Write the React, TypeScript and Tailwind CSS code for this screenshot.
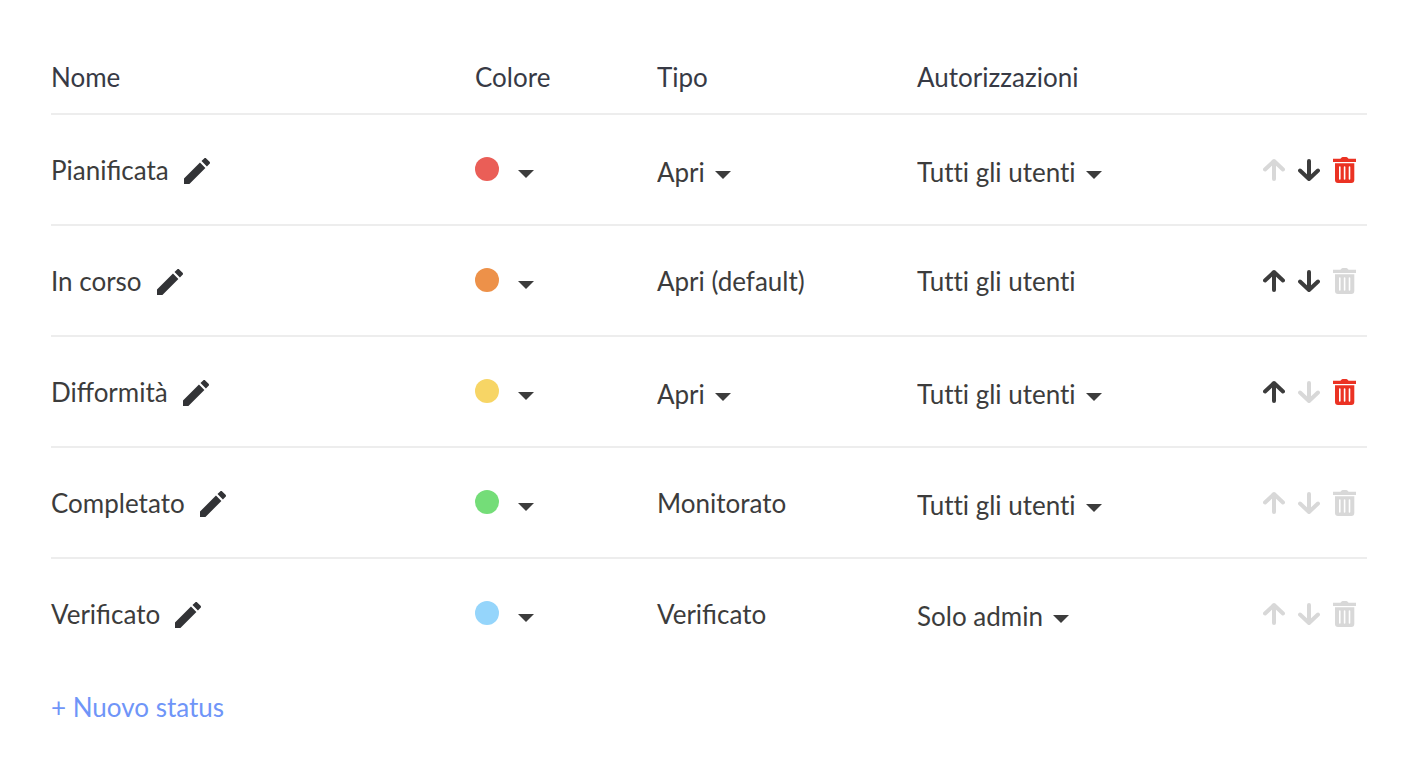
type Status = {
  name: string;
  color: string;
  colorName: string;
  type: string;
  typeEditable: boolean;
  access: string;
  accessEditable: boolean;
  canMoveUp: boolean;
  canMoveDown: boolean;
  canDelete: boolean;
};

const ACCESS_OPTIONS = ["Tutti gli utenti", "Solo admin"];
const TYPE_OPTIONS = ["Apri", "Monitorato", "Verificato"];

const STATUSES: Status[] = [
  {
    name: "Pianificata",
    color: "bg-[#ea5e57]",
    colorName: "rosso",
    type: "Apri",
    typeEditable: true,
    access: "Tutti gli utenti",
    accessEditable: true,
    canMoveUp: false,
    canMoveDown: true,
    canDelete: true,
  },
  {
    name: "In corso",
    color: "bg-[#ed9149]",
    colorName: "arancione",
    type: "Apri (default)",
    typeEditable: false,
    access: "Tutti gli utenti",
    accessEditable: false,
    canMoveUp: true,
    canMoveDown: true,
    canDelete: false,
  },
  {
    name: "Difformità",
    color: "bg-[#f7d565]",
    colorName: "giallo",
    type: "Apri",
    typeEditable: true,
    access: "Tutti gli utenti",
    accessEditable: true,
    canMoveUp: true,
    canMoveDown: false,
    canDelete: true,
  },
  {
    name: "Completato",
    color: "bg-[#74dd78]",
    colorName: "verde",
    type: "Monitorato",
    typeEditable: false,
    access: "Tutti gli utenti",
    accessEditable: true,
    canMoveUp: false,
    canMoveDown: false,
    canDelete: false,
  },
  {
    name: "Verificato",
    color: "bg-[#95d5fb]",
    colorName: "azzurro",
    type: "Verificato",
    typeEditable: false,
    access: "Solo admin",
    accessEditable: true,
    canMoveUp: false,
    canMoveDown: false,
    canDelete: false,
  },
];

function PencilIcon() {
  return (
    <svg viewBox="3 3 18 18" className="size-[26px]" fill="currentColor" aria-hidden="true">
      <path d="M20.71 7.04c.39-.39.39-1.04 0-1.41l-2.34-2.34c-.37-.39-1.02-.39-1.41 0l-1.84 1.83 3.75 3.75M3 17.25V21h3.75L17.81 9.93l-3.75-3.75L3 17.25Z" />
    </svg>
  );
}

function CaretIcon() {
  return (
    <svg viewBox="0 0 16 8" className="h-2 w-4" fill="currentColor" aria-hidden="true">
      <path d="M0 0h16L8 8Z" />
    </svg>
  );
}

function ArrowIcon({ down = false }: { down?: boolean }) {
  return (
    <svg
      viewBox="0 0 22 24"
      className="h-6 w-[22px]"
      fill="none"
      stroke="currentColor"
      strokeWidth="4"
      strokeLinecap="round"
      strokeLinejoin="round"
      aria-hidden="true"
    >
      {down ? <path d="M11 3v18M2 12.5l9 8.5 9-8.5" /> : <path d="M11 21V3M2 11.5L11 3l9 8.5" />}
    </svg>
  );
}

function TrashIcon() {
  return (
    <svg viewBox="0 0 23 26" className="h-[26px] w-[23px]" fill="currentColor" aria-hidden="true">
      <path d="M0 1.8h7.4L8.6.4Q9 0 9.6 0h3.8q.6 0 1 .4l1.2 1.4H23V5H0Z" />
      <path
        fillRule="evenodd"
        d="M2 6.3h19.3V23a3 3 0 0 1-3 3H5a3 3 0 0 1-3-3ZM6 10v12q0 .8.8.8t.8-.8V10q0-.8-.8-.8T6 10Zm4.8 0v12q0 .8.8.8t.8-.8V10q0-.8-.8-.8t-.8.8Zm4.9 0v12q0 .8.8.8t.8-.8V10q0-.8-.8-.8t-.8.8Z"
      />
    </svg>
  );
}

function Dropdown({ label, value, options }: { label: string; value: string; options: string[] }) {
  return (
    <div className="relative inline-flex items-center pt-0.5 align-middle">
      <select
        aria-label={label}
        defaultValue={value}
        className="field-sizing-content cursor-pointer appearance-none bg-transparent pr-[26px] leading-8 [font-variant-ligatures:none]"
      >
        {options.map((option) => (
          <option key={option}>{option}</option>
        ))}
      </select>
      <span className="pointer-events-none absolute right-0 pt-1.5">
        <CaretIcon />
      </span>
    </div>
  );
}

function StatusRow({ status }: { status: Status }) {
  const enabled = "text-[#3c3c3c]";
  const disabled = "text-[#d8d8d8]";

  return (
    <tr className="h-[111px] border-t-2 border-[#ededed]">
      <td>
        <div className="flex items-center gap-[15px]">
          <span>{status.name}</span>
          <button type="button" aria-label={`Modifica ${status.name}`} className="pt-0.5 text-[#323336]">
            <PencilIcon />
          </button>
        </div>
      </td>
      <td>
        <button
          type="button"
          aria-haspopup="menu"
          aria-label={`Colore di ${status.name}: ${status.colorName}`}
          className="flex items-center gap-[19px] pb-0.5"
        >
          <span className={`size-6 rounded-full ${status.color}`} />
          <span className="pt-2.5">
            <CaretIcon />
          </span>
        </button>
      </td>
      <td>
        {status.typeEditable ? (
          <Dropdown label={`Tipo di ${status.name}`} value={status.type} options={TYPE_OPTIONS} />
        ) : (
          status.type
        )}
      </td>
      <td className="[font-variant-ligatures:none]">
        {status.accessEditable ? (
          <Dropdown
            label={`Autorizzazioni di ${status.name}`}
            value={status.access}
            options={ACCESS_OPTIONS}
          />
        ) : (
          status.access
        )}
      </td>
      <td>
        <div className="flex items-center gap-[13px]">
          <button
            type="button"
            aria-label={`Sposta su ${status.name}`}
            disabled={!status.canMoveUp}
            className={status.canMoveUp ? enabled : disabled}
          >
            <ArrowIcon />
          </button>
          <button
            type="button"
            aria-label={`Sposta giù ${status.name}`}
            disabled={!status.canMoveDown}
            className={status.canMoveDown ? enabled : disabled}
          >
            <ArrowIcon down />
          </button>
          <button
            type="button"
            aria-label={`Elimina ${status.name}`}
            disabled={!status.canDelete}
            className={status.canDelete ? "text-[#eb3223]" : disabled}
          >
            <TrashIcon />
          </button>
        </div>
      </td>
    </tr>
  );
}

export default function App() {
  return (
    <main className="min-h-screen bg-white pt-10 pr-[45px] pb-8 pl-[51px] font-['Lato',sans-serif] text-[26px] leading-8 text-[#3c3c3c]">
      <table className="w-full table-fixed border-collapse text-left">
        <colgroup>
          <col />
          <col className="w-[182px]" />
          <col className="w-[260px]" />
          <col className="w-[346px]" />
          <col className="w-[104px]" />
        </colgroup>
        <thead>
          <tr className="h-[74px] text-[#373a45]">
            <th scope="col" className="font-normal">Nome</th>
            <th scope="col" className="font-normal">Colore</th>
            <th scope="col" className="font-normal">Tipo</th>
            <th scope="col" className="font-normal">Autorizzazioni</th>
            <td />
          </tr>
        </thead>
        <tbody>
          {STATUSES.map((status) => (
            <StatusRow key={status.name} status={status} />
          ))}
        </tbody>
      </table>
      <button type="button" className="mt-[22px] cursor-pointer text-[#6f95f8]">
        + Nuovo status
      </button>
    </main>
  );
}
